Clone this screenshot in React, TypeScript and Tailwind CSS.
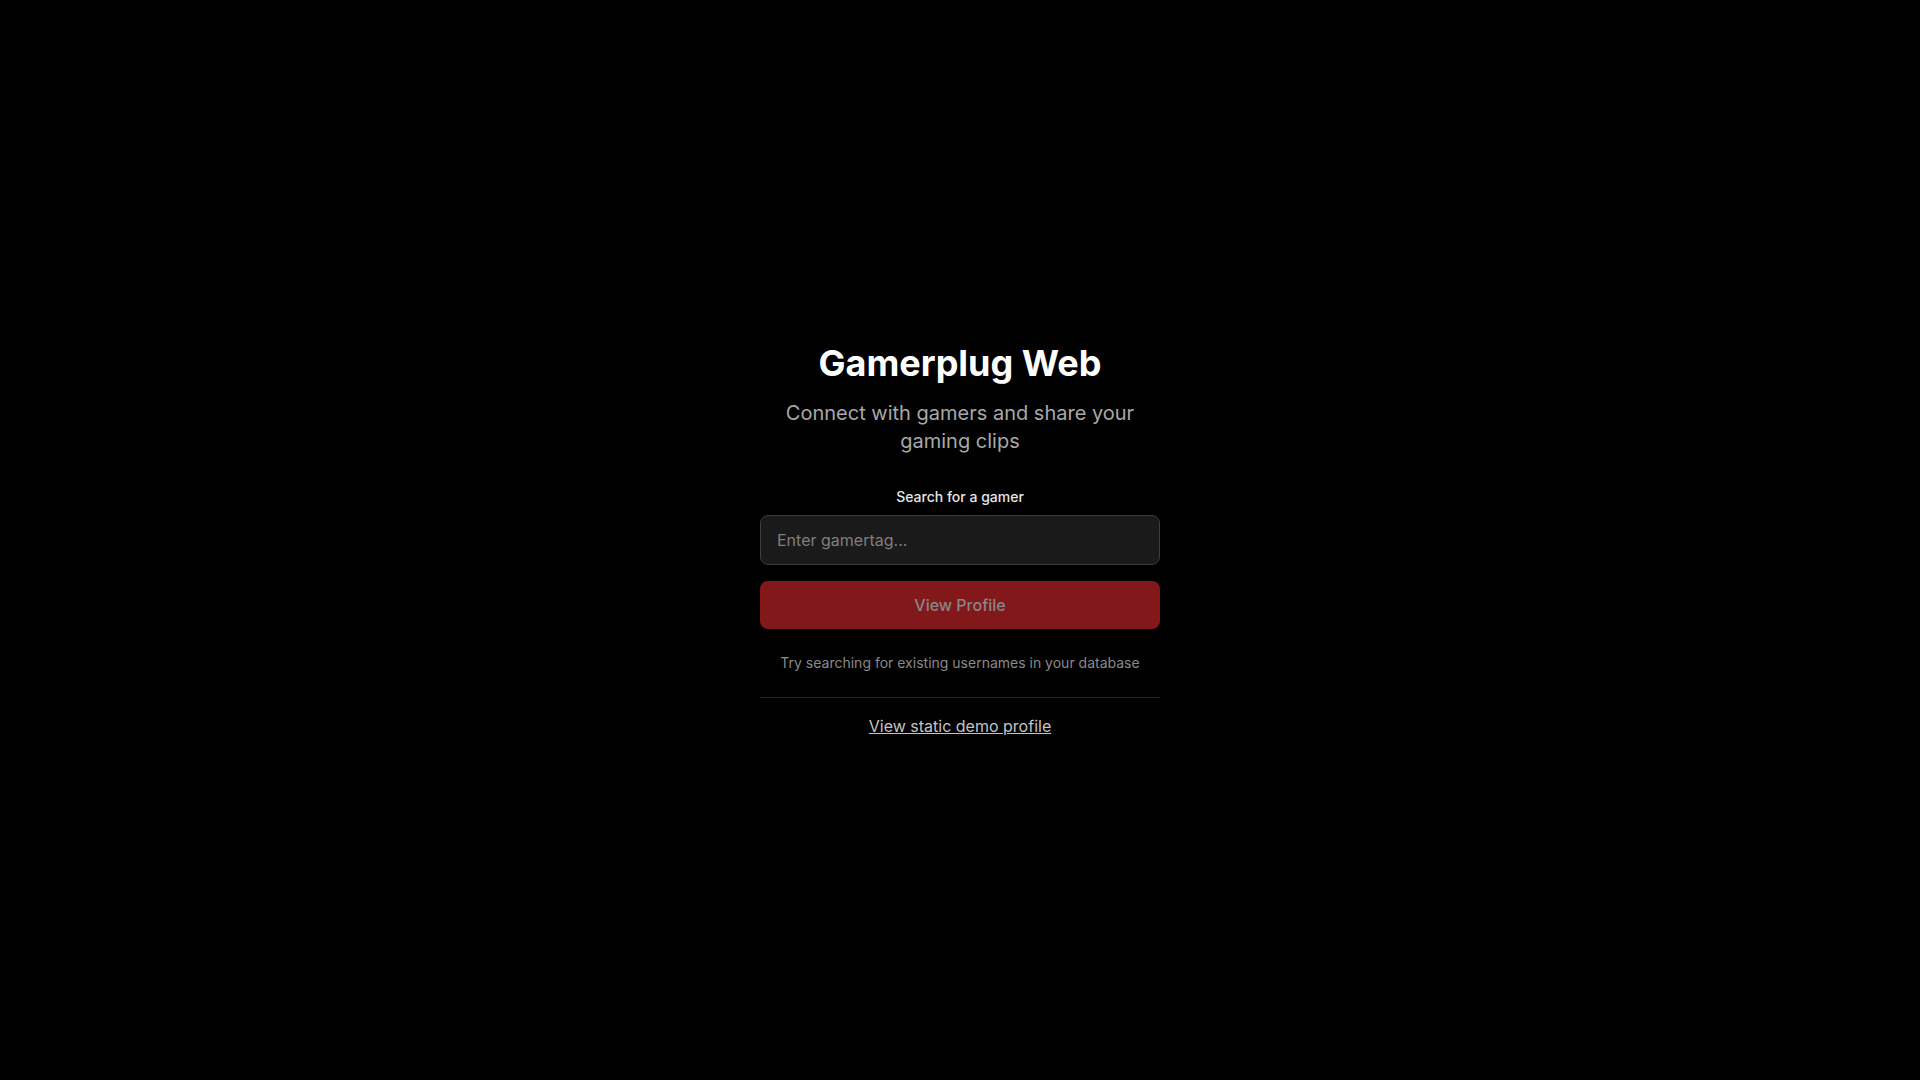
import React from "react";

export default function App() {
  return (
    <div
      className="min-h-screen w-full bg-black flex items-center justify-center text-white"
      style={{ fontFamily: "Inter, 'Noto Sans', sans-serif" }}
    >
      <div className="w-[400px] flex flex-col items-center text-center">
        <h1 className="text-4xl leading-10 font-bold text-white mb-4">Gamerplug Web</h1>
        <p className="text-xl leading-7 text-[#a8a8a8] mb-8">
          Connect with gamers and share your gaming clips
        </p>
        <label className="block text-sm leading-5 font-medium text-[#e5e5e5] mb-2">
          Search for a gamer
        </label>
        <input
          type="text"
          placeholder="Enter gamertag..."
          className="w-full h-[50px] px-4 text-base rounded-lg bg-[#1a1a1a] border border-[#3d3d3d] text-white placeholder:text-[#7f7f7f] outline-none"
        />
        <button
          disabled
          className="w-full h-12 mt-4 rounded-lg bg-[#82181a] text-base text-[#878787] font-medium"
        >
          View Profile
        </button>
        <p className="mt-6 text-sm leading-5 text-[#8a8a8a]">
          Try searching for existing usernames in your database
        </p>
        <div className="w-full mt-6 border-t border-[#262626] pt-4">
          <a href="#" className="text-base leading-6 text-[#c4c4c4] underline">
            View static demo profile
          </a>
        </div>
      </div>
    </div>
  );
}
